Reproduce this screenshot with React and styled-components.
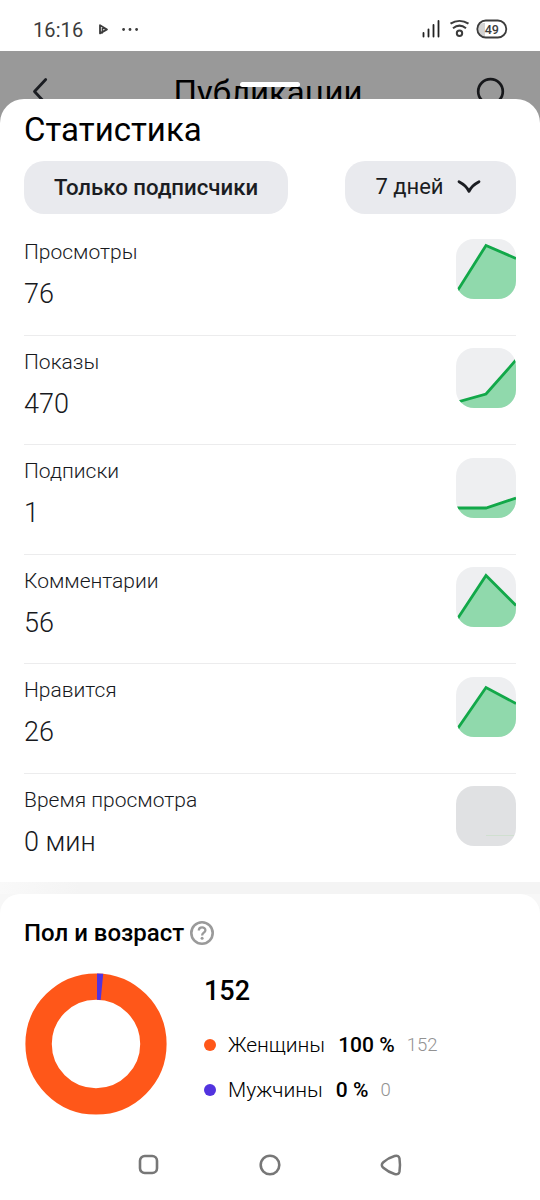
import React from "react";
import styled, { createGlobalStyle } from "styled-components";

const metrics = [
  { title: "Просмотры", value: "76", points: [[0, 54], [30, 6.5], [60, 19.5]] },
  { title: "Показы", value: "470", points: [[0, 54.5], [30, 46], [60, 12]] },
  { title: "Подписки", value: "1", points: [[0, 50], [30, 50], [60, 40]] },
  { title: "Комментарии", value: "56", points: [[0, 54], [30, 8.5], [60, 38.5]] },
  { title: "Нравится", value: "26", points: [[0, 54], [30, 10.5], [60, 26.5]] },
  { title: "Время просмотра", value: "0 мин", points: null },
];

const genders = [
  { title: "Женщины", percent: "100 %", count: "152", color: "#ff5719" },
  { title: "Мужчины", percent: "0 %", count: "0", color: "#5233df" },
];

const GlobalStyles = createGlobalStyle`
  * {
    box-sizing: border-box;
  }
  body {
    margin: 0;
    background: #fff;
    font-family: Roboto, "Noto Sans", sans-serif;
    color: #000;
  }
  svg {
    display: block;
    flex-shrink: 0;
  }
`;

const Screen = styled.div`
  display: flex;
  flex-direction: column;
  width: 540px;
  height: 1200px;
  overflow: hidden;
  background: #fff;
`;

const StatusBar = styled.div`
  display: flex;
  align-items: center;
  justify-content: space-between;
  flex-shrink: 0;
  height: 51px;
  padding: 8px 31px 0 33px;
  color: #3c3c3c;

  .side {
    display: flex;
    align-items: center;
  }
  .time {
    font-size: 20px;
    line-height: 28px;
    letter-spacing: 0.1px;
    margin-right: 15px;
  }
`;

const Backdrop = styled.div`
  display: flex;
  flex-direction: column;
  flex: 1;
  min-height: 0;
  background: #999;
`;

const PageHeader = styled.header`
  position: relative;
  display: flex;
  align-items: flex-start;
  justify-content: space-between;
  height: 48px;
  flex-shrink: 0;
  padding: 21px 35px 0 32px;

  .page-title {
    margin-left: 17px;
    padding-top: 1px;
    font-size: 33px;
    line-height: 40px;
  }
`;

const DragHandle = styled.span`
  position: absolute;
  left: 240px;
  top: 31px;
  width: 60px;
  height: 5px;
  border-radius: 3px;
  background: #fff;
`;

const Sheet = styled.main`
  position: relative;
  display: flex;
  flex-direction: column;
  flex: 1;
  min-height: 0;
  border-radius: 24px 24px 0 0;
  background: #fff;
`;

const Stats = styled.section`
  height: 783px;
  flex-shrink: 0;
  padding: 11px 24px 0;
`;

const SheetTitle = styled.h1`
  margin: 0 0 10.5px;
  font-size: 33px;
  line-height: 40px;
  font-weight: 400;
`;

const Filters = styled.div`
  display: flex;
  justify-content: space-between;
  margin-bottom: 12px;
`;

const FilterButton = styled.button`
  display: flex;
  align-items: center;
  justify-content: center;
  gap: 13px;
  width: ${(props) => props.$width};
  height: 53.5px;
  padding: ${(props) => props.$padding};
  border: none;
  border-radius: 20px;
  background: #e9eaee;
  color: #1b1d22;
  font-family: inherit;
  font-size: ${(props) => props.$size};
  font-weight: ${(props) => props.$weight};
`;

const MetricRow = styled.div`
  display: flex;
  justify-content: space-between;
  height: 109.5px;
  padding-top: 12.5px;
  border-bottom: 1.5px solid #ececed;

  &:last-child {
    border-bottom: none;
  }
`;

const MetricText = styled.div`
  display: flex;
  flex-direction: column;
  gap: 13px;
  padding-top: 0.5px;
  font-weight: 300;
  color: #17191d;

  .title {
    font-size: 21px;
    line-height: 26px;
  }
  .value {
    font-size: 27px;
    line-height: 32px;
  }
`;

const Thumb = styled.div`
  width: 60px;
  height: 60px;
  border-radius: 18px;
  overflow: hidden;
  background: ${(props) => (props.$empty ? "#e0e1e3" : "#eeeff1")};
`;

const Divider = styled.div`
  height: 12px;
  flex-shrink: 0;
  background: linear-gradient(to right, #f9f9f9, #f4f4f4 80px);
`;

const AudienceWrap = styled.div`
  background: #f7f7f7;
  flex: 1;
`;

const Audience = styled.section`
  height: 100%;
  padding: 25px 24px 0;
  border-radius: 20px 20px 0 0;
  background: #fff;
`;

const AudienceTitle = styled.h2`
  display: flex;
  align-items: center;
  gap: 5px;
  margin: 0 0 26px;
  font-size: 24px;
  line-height: 28px;
  font-weight: 500;
`;

const AudienceBody = styled.div`
  display: flex;
  gap: 36px;
`;

const Legend = styled.div`
  .total {
    padding-top: 2px;
    margin-bottom: 24px;
    font-size: 27px;
    line-height: 32px;
    font-weight: 500;
  }
`;

const LegendItem = styled.div`
  display: flex;
  align-items: center;
  height: 28px;
  margin-bottom: 17px;
  font-size: 21px;
  line-height: 28px;

  .dot {
    width: 12px;
    height: 12px;
    margin-right: 12px;
    border-radius: 50%;
    background: ${(props) => props.$color};
  }
  .title {
    margin-right: 13px;
    font-weight: 300;
  }
  .percent {
    margin-right: 12px;
    font-weight: 500;
  }
  .count {
    color: #929292;
    font-size: 18.5px;
    font-weight: 300;
  }
`;

const NavBar = styled.nav`
  display: flex;
  align-items: center;
  justify-content: center;
  gap: 99px;
  height: 70px;
  flex-shrink: 0;
  background: #fff;
`;

const StatusIcons = () => (
  <svg width="88" height="22" viewBox="0 0 88 22" fill="none" stroke="#3c3c3c">
    <g strokeWidth="1.8" strokeLinecap="round" stroke="#222">
      <path d="M2.5 14v3.500M7.500 10.300v7.200M12.500 6v11.500M17.500 2v15.500" />
    </g>
    <g strokeWidth="2">
      <path d="M29.5 4.7c5.5-3.7 12.5-3.7 18 0" />
      <path d="M32 9.3c4-3.3 9-3.3 13 0" />
      <circle cx="38.5" cy="14.2" r="2.7" />
    </g>
    <path d="M64 4h-1.5a6.2 6.2 0 0 0 0 13H64z" fill="#d2d2d2" stroke="none" />
    <rect x="56.3" y="1.500" width="29" height="17" rx="8.5" strokeWidth="1.8" />
    <text x="70.8" y="14.800" textAnchor="middle" fontSize="12.5" fontWeight="500" fill="#3c3c3c" stroke="none">
      49
    </text>
  </svg>
);

const Sparkline = ({ points }) => {
  if (!points) {
    return (
      <svg width="60" height="60">
        <path d="M30 49.5h28" stroke="#d0dfd0" strokeWidth="1" />
      </svg>
    );
  }
  const line = points.map((point) => point.join(",")).join(" ");
  return (
    <svg width="60" height="60">
      <polygon points={`${line} 60,60 0,60`} fill="#90d9ac" />
      <polyline points={line} fill="none" stroke="#12a849" strokeWidth="2.8" />
    </svg>
  );
};

const Donut = () => (
  <svg width="144" height="144" viewBox="0 0 144 144" fill="none">
    <circle cx="72" cy="71" r="57.4" stroke="#ff5719" strokeWidth="26.4" />
    <path d="M73 .4L79.2.8L76.7 27L73 26.8z" fill="#5233df" />
  </svg>
);

const App = () => {
  return (
    <Screen>
      <GlobalStyles />
      <StatusBar>
        <div className="side">
          <span className="time">16:16</span>
          <svg width="42" height="14" viewBox="0 0 42 14" fill="none">
            <path d="M2 2.2L9 6.4L2 10.400z" stroke="#3c3c3c" strokeWidth="1.8" strokeLinejoin="round" />
            <path d="M4.3 10.400V5.700h3" stroke="#3c3c3c" strokeWidth="1.3" />
            <g fill="#3c3c3c">
              <circle cx="25.6" cy="6.5" r="1.4" />
              <circle cx="32" cy="6.5" r="1.4" />
              <circle cx="38.6" cy="6.5" r="1.4" />
            </g>
          </svg>
        </div>
        <StatusIcons />
      </StatusBar>
      <Backdrop>
        <PageHeader>
          <svg width="18" height="40" viewBox="0 0 18 40" fill="none">
            <path d="M13.7 7.5L2.5 19.5L13.7 31.5" stroke="#1b1d22" strokeWidth="2.8" strokeLinecap="round" strokeLinejoin="round" />
          </svg>
          <span className="page-title">Публикации</span>
          <svg width="36" height="40" viewBox="0 0 36 40" fill="none">
            <circle cx="21.5" cy="19.5" r="12.3" stroke="#17181b" strokeWidth="2.7" />
          </svg>
          <DragHandle />
        </PageHeader>
        <Sheet>
          <Stats>
            <SheetTitle>Статистика</SheetTitle>
            <Filters>
              <FilterButton $width="264px" $weight={500} $size="22.2px" $padding="0 0 1px">
                Только подписчики
              </FilterButton>
              <FilterButton $width="171px" $weight={400} $size="22px" $padding="0 5px 1px 0">
                7 дней
                <svg width="24" height="16" viewBox="0 0 24 16" fill="none">
                  <path d="M2 2.700C5.500 4.500 10 8 12 12.300C14 8 18.500 4.500 22 2.700" stroke="#1b1d22" strokeWidth="2.8" strokeLinecap="round" strokeLinejoin="round" />
                </svg>
              </FilterButton>
            </Filters>
            {metrics.map((item) => (
              <MetricRow key={item.title}>
                <MetricText>
                  <span className="title">{item.title}</span>
                  <span className="value">{item.value}</span>
                </MetricText>
                <Thumb $empty={!item.points}>
                  <Sparkline points={item.points} />
                </Thumb>
              </MetricRow>
            ))}
          </Stats>
          <Divider />
          <AudienceWrap>
            <Audience>
              <AudienceTitle>
                Пол и возраст
                <svg width="26" height="26" viewBox="0 0 26 26" fill="none" stroke="#9a9a9a">
                  <circle cx="13" cy="13" r="10.7" strokeWidth="2.6" />
                  <path d="M9.8 10.5c0-4.3 6.6-4.1 6.6-.3 0 2.5-3.3 2.5-3.3 5.2" strokeWidth="2.3" />
                  <circle cx="13.1" cy="18.2" r="1.5" fill="#9a9a9a" stroke="none" />
                </svg>
              </AudienceTitle>
              <AudienceBody>
                <Donut />
                <Legend>
                  <div className="total">152</div>
                  {genders.map((item) => (
                    <LegendItem key={item.title} $color={item.color}>
                      <span className="dot" />
                      <span className="title">{item.title}</span>
                      <span className="percent">{item.percent}</span>
                      <span className="count">{item.count}</span>
                    </LegendItem>
                  ))}
                </Legend>
              </AudienceBody>
            </Audience>
          </AudienceWrap>
        </Sheet>
      </Backdrop>
      <NavBar>
        <svg width="22" height="22" viewBox="0 0 22 22" fill="none">
          <rect x="2" y="2" width="17" height="17" rx="4.8" stroke="#777" strokeWidth="2.6" />
        </svg>
        <svg width="22" height="22" viewBox="0 0 22 22" fill="none">
          <circle cx="11" cy="11" r="9.3" stroke="#777" strokeWidth="2.6" />
        </svg>
        <svg width="22" height="22" viewBox="0 0 22 22" fill="none">
          <path d="M14.6 2C17.5 1.2 19 2 19.5 4.6C20.2 9 20.2 13 19.5 17.4C19 20 17.5 20.8 14.6 20C10.5 18.8 6.5 16.6 3.3 13.8C1.3 12 1.3 10 3.3 8.2C6.5 5.4 10.5 3.2 14.6 2Z" stroke="#777" strokeWidth="2.5" />
        </svg>
      </NavBar>
    </Screen>
  );
};

export default App;
